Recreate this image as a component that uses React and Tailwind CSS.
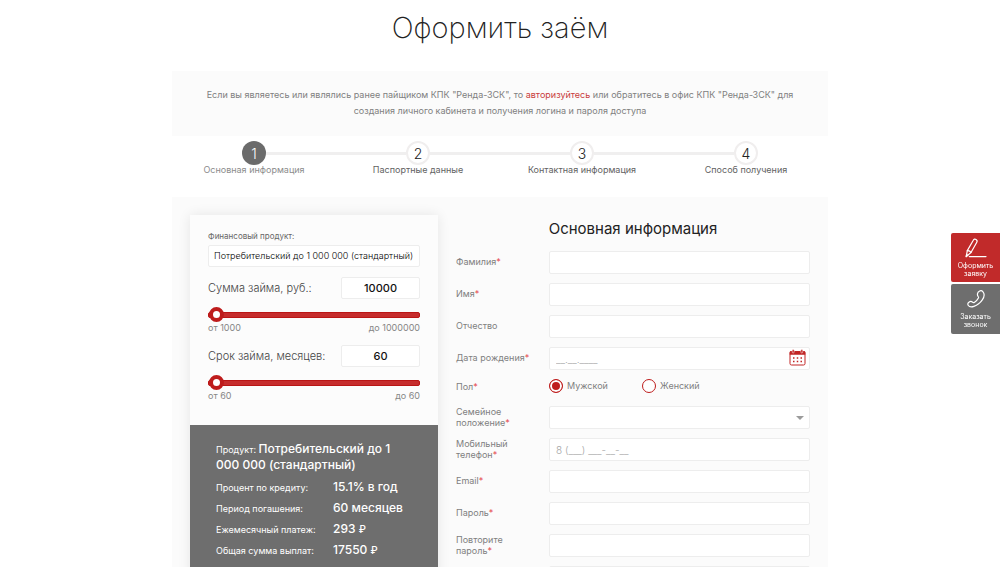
import React, { useState } from "react";

const steps = [
  "Основная информация",
  "Паспортные данные",
  "Контактная информация",
  "Способ получения",
];

const fieldClass =
  "block h-[23px] w-full rounded-xs border border-[#ededed] bg-white px-1.5 text-[10px] font-light text-gray-800 placeholder:text-[#a5a5a5] focus:outline-none focus:border-gray-400";

/* ---------------- Icons ---------------- */

const PencilIcon = () => (
  <svg
    width="22"
    height="20"
    viewBox="0 0 22 20"
    fill="none"
    stroke="currentColor"
    strokeWidth="1.2"
    strokeLinecap="round"
    strokeLinejoin="round"
  >
    <path d="M1.2 18.6 2.3 12.6 8.3 2.2C8.9 1.1 10 .8 11 1.4s1.4 1.7.8 2.8L6 14.5Z" />
    <path d="M2.3 12.6c1.6-.2 3 .6 3.7 1.9M4.3 18.6H21" />
    <path d="M1.2 18.6l.4-2 1.2.7Z" fill="currentColor" />
  </svg>
);

const PhoneIcon = () => (
  <svg
    width="18"
    height="18"
    viewBox="0 0 18 18"
    fill="none"
    stroke="currentColor"
    strokeWidth="1.2"
    strokeLinejoin="round"
  >
    <path d="M12.3 1.2c1.2-.7 2.8-.4 3.7.6 1.6 1.9 1.4 4.9-.7 8.1-2 3-5.2 5.4-8.4 6.5-2.4.8-4.6.5-5.6-.9-.8-1.1-.5-2.5.6-3.3 1.2-.9 2.7-.9 3.7 0 .5.5 1 .6 1.7.2 1.7-1 3.2-2.6 4.100-4.400.3-.7.2-1.200-.3-1.700-1.200-1.500-.7-4.100 1.200-5.100Z" />
  </svg>
);

const CalendarIcon = () => (
  <svg width="17" height="17" viewBox="0 0 17 17" fill="none">
    <rect x="1" y="2.5" width="15" height="13.5" rx="1.5" stroke="#c12525" />
    <path d="M.7 3.500c0-.8.6-1.400 1.400-1.400h12.800c.8 0 1.400.6 1.400 1.400v2.200H.7Z" fill="#c12525" />
    <rect x="3.2" y=".5" width="2" height="3.5" rx="1" fill="#c12525" stroke="#fff" strokeWidth=".5" />
    <rect x="11.8" y=".5" width="2" height="3.5" rx="1" fill="#c12525" stroke="#fff" strokeWidth=".5" />
    <path
      d="M4 9h1.500M7.750 9h1.500M11.500 9H13M4 12.500h1.500M7.750 12.500h1.500M11.500 12.500H13"
      stroke="#c12525"
      strokeWidth="1.5"
    />
  </svg>
);

/* ---------------- Form parts ---------------- */

const Row = ({ id, label, required, children }) => (
  <div className="flex min-h-[23px] items-center">
    <label
      htmlFor={id}
      className="-my-1 mr-[13px] w-20 shrink-0 pb-0.5 text-[9px] leading-[11px] text-[#7f7f7f]"
    >
      {label}
      {required && <span className="text-[#e5484d]">*</span>}
    </label>
    <div className="relative min-w-0 flex-1">{children}</div>
  </div>
);

const TextRow = ({ id, label, required, type = "text" }) => (
  <Row id={id} label={label} required={required}>
    <input id={id} type={type} className={fieldClass} />
  </Row>
);

const RangeField = ({ id, label, min, max, step, value, onChange }) => (
  <div>
    <div className="flex items-center justify-between">
      <label htmlFor={id} className="text-[11px] font-light text-[#444]">
        {label}
      </label>
      <input
        id={id}
        value={value}
        onChange={(e) => onChange(e.target.value)}
        className="h-[22px] w-[79px] rounded-xs border border-[#ededed] bg-white text-center text-[11px] font-medium text-[#111]"
      />
    </div>
    <input
      type="range"
      aria-label={label}
      min={min}
      max={max}
      step={step}
      value={value}
      onChange={(e) => onChange(e.target.value)}
      className="mt-2 block h-[15px] w-full cursor-pointer appearance-none bg-transparent [&::-webkit-slider-runnable-track]:h-[6px] [&::-webkit-slider-runnable-track]:rounded-xs [&::-webkit-slider-runnable-track]:border [&::-webkit-slider-runnable-track]:border-[#ba1616] [&::-webkit-slider-runnable-track]:bg-[#c62d2d] [&::-webkit-slider-thumb]:-mt-[6px] [&::-webkit-slider-thumb]:size-[15px] [&::-webkit-slider-thumb]:appearance-none [&::-webkit-slider-thumb]:rounded-full [&::-webkit-slider-thumb]:border-4 [&::-webkit-slider-thumb]:border-[#be1c1c] [&::-webkit-slider-thumb]:bg-white"
    />
    <div className="flex justify-between pt-px text-[9px] leading-[10px] text-[#868686]">
      <span>от {min}</span>
      <span>до {max}</span>
    </div>
  </div>
);

const Radio = ({ value, label, checked, onChange }) => (
  <label className="flex w-[93px] items-center gap-1 text-[9px] leading-3 text-[#7f7f7f]">
    <input
      type="radio"
      name="gender"
      value={value}
      checked={checked}
      onChange={() => onChange(value)}
      className="size-[14px] appearance-none rounded-full border border-[#be1c1c] bg-white checked:bg-[#be1c1c] checked:shadow-[inset_0_0_0_2px_#fff]"
    />
    {label}
  </label>
);

const SummaryLine = ({ label, children }) => (
  <div className="flex items-baseline">
    <dt className="w-[117px] shrink-0 text-[9px]">{label}</dt>
    <dd className="text-[12px] font-medium">{children}</dd>
  </div>
);

const Ruble = () => <span className="text-[10px]">₽</span>;

/* ---------------- Page ---------------- */

const App = () => {
  const [amount, setAmount] = useState("10000");
  const [term, setTerm] = useState("60");
  const [gender, setGender] = useState("male");

  return (
    <div className="min-h-screen bg-white font-[Inter,sans-serif]">
      <main className="mx-auto w-full max-w-[656px]">
        <h1 className="pt-3 text-center text-[29px] leading-8 font-extralight text-[#222]">
          Оформить заём
        </h1>

        <p className="mt-[27px] bg-[#fbfbfb] px-5 pt-4 pb-[17px] text-center text-[9px] leading-4 text-[#808080]">
          Если вы являетесь или являлись ранее пайщиком КПК "Ренда-ЗСК", то{" "}
          <a href="#login" className="text-[#c93c3c]">
            авторизуйтесь
          </a>{" "}
          или обратитесь в офис КПК "Ренда-ЗСК" для создания личного кабинета и
          получения логина и пароля доступа
        </p>

        <ol className="mt-[5px] flex">
          {steps.map((step, i) => (
            <li key={step} className="flex flex-1 flex-col items-center">
              <div className="flex w-full items-center">
                <span
                  className={`h-[3px] flex-1 ${i > 0 ? "bg-[#f0efef]" : ""}`}
                />
                <span
                  className={`flex size-6 items-center justify-center rounded-full text-[14px] font-light ${
                    i === 0
                      ? "bg-[#6b6b6b] text-white"
                      : "border-2 border-[#f0eeee] bg-white text-[#222]"
                  }`}
                >
                  {i + 1}
                </span>
                <span
                  className={`h-[3px] flex-1 ${
                    i < steps.length - 1 ? "bg-[#f0efef]" : ""
                  }`}
                />
              </div>
              <span
                className={`text-[9px] leading-[10px] ${
                  i === 0 ? "text-[#8c8c8c]" : "text-[#626262]"
                }`}
              >
                {step}
              </span>
            </li>
          ))}
        </ol>

        <div className="mt-[22px] flex items-stretch bg-[#fbfbfb] p-[18px]">
          {/* Calculator */}
          <section className="flex w-[248px] shrink-0 flex-col bg-[#fcfcfc] shadow-[0_0_12px_rgba(0,0,0,0.09)]">
            <div className="px-[18px] pt-4 pb-6">
              <label
                htmlFor="product"
                className="block text-[8px] leading-[10px] text-[#666]"
              >
                Финансовый продукт:
              </label>
              <select
                id="product"
                className="mt-1 mb-[10px] block h-[22px] w-full appearance-none rounded-xs border border-[#ededed] bg-white pr-0 pl-[5px] text-[9px] font-light text-black"
              >
                <option>Потребительский до 1 000 000 (стандартный)</option>
              </select>
              <div className="flex flex-col gap-3">
                <RangeField
                  id="amount"
                  label="Сумма займа, руб.:"
                  min={1000}
                  max={1000000}
                  step={50000}
                  value={amount}
                  onChange={setAmount}
                />
                <RangeField
                  id="term"
                  label="Срок займа, месяцев:"
                  min={60}
                  max={60}
                  step={1}
                  value={term}
                  onChange={setTerm}
                />
              </div>
            </div>

            <div className="flex-1 bg-[#6e6e6e] px-[26px] pt-4 text-white">
              <p className="text-[9px] leading-[15px]">
                Продукт:{" "}
                <span className="text-[12px] font-medium">
                  Потребительский до 1 000 000 (стандартный)
                </span>
              </p>
              <dl className="mt-[6px] flex flex-col gap-1 leading-4">
                <SummaryLine label="Процент по кредиту:">15.1% в год</SummaryLine>
                <SummaryLine label="Период погашения:">60 месяцев</SummaryLine>
                <SummaryLine label="Ежемесячный платеж:">
                  293 <Ruble />
                </SummaryLine>
                <SummaryLine label="Общая сумма выплат:">
                  17550 <Ruble />
                </SummaryLine>
              </dl>
            </div>
          </section>

          {/* Personal data */}
          <form className="ml-[18px] flex min-w-0 flex-1 flex-col gap-[9px]">
            <h2 className="pt-1 pb-[3px] text-center text-[15px] leading-5 text-[#222]">
              Основная информация
            </h2>
            <TextRow id="surname" label="Фамилия" required />
            <TextRow id="name" label="Имя" required />
            <TextRow id="patronymic" label="Отчество" />
            <Row id="birthday" label="Дата рождения" required>
              <input
                id="birthday"
                placeholder="__.__.____"
                className={fieldClass}
              />
              <button
                type="button"
                aria-label="Календарь"
                className="absolute top-[2px] right-1"
              >
                <CalendarIcon />
              </button>
            </Row>
            <fieldset className="flex h-[18px] items-start">
              <legend className="float-left w-[93px] pt-0.5 text-[9px] leading-3 text-[#7f7f7f]">
                Пол<span className="text-[#e5484d]">*</span>
              </legend>
              <Radio
                value="male"
                label="Мужской"
                checked={gender === "male"}
                onChange={setGender}
              />
              <Radio
                value="female"
                label="Женский"
                checked={gender === "female"}
                onChange={setGender}
              />
            </fieldset>
            <Row id="marital" label="Семейное положение" required>
              <select id="marital" className={`${fieldClass} appearance-none`} />
              <span className="pointer-events-none absolute top-[10px] right-[6px] border-x-4 border-t-4 border-x-transparent border-t-[#9b9b9b]" />
            </Row>
            <Row id="phone" label="Мобильный телефон" required>
              <input
                id="phone"
                type="tel"
                placeholder="8 (___) ___-__-__"
                className={fieldClass}
              />
            </Row>
            <TextRow id="email" label="Email" required type="email" />
            <TextRow id="password" label="Пароль" required type="password" />
            <TextRow
              id="password-repeat"
              label="Повторите пароль"
              required
              type="password"
            />
            <TextRow id="inn" label="ИНН" />
          </form>
        </div>
      </main>

      {/* Side actions */}
      <aside className="fixed top-[233px] right-0 flex w-[49px] flex-col gap-0.5 text-center text-[7px] leading-2 text-white">
        <a
          href="#apply"
          className="flex h-[49px] flex-col items-center rounded-l-xs bg-[#c12a2a] pt-[5px]"
        >
          <PencilIcon />
          <span className="mt-1">
            Оформить
            <br />
            заявку
          </span>
        </a>
        <a
          href="#call"
          className="flex h-[50px] flex-col items-center rounded-l-xs bg-[#6e6e6e] pt-[6px]"
        >
          <PhoneIcon />
          <span className="mt-[5px]">
            Заказать
            <br />
            звонок
          </span>
        </a>
      </aside>
    </div>
  );
};

export default App;
